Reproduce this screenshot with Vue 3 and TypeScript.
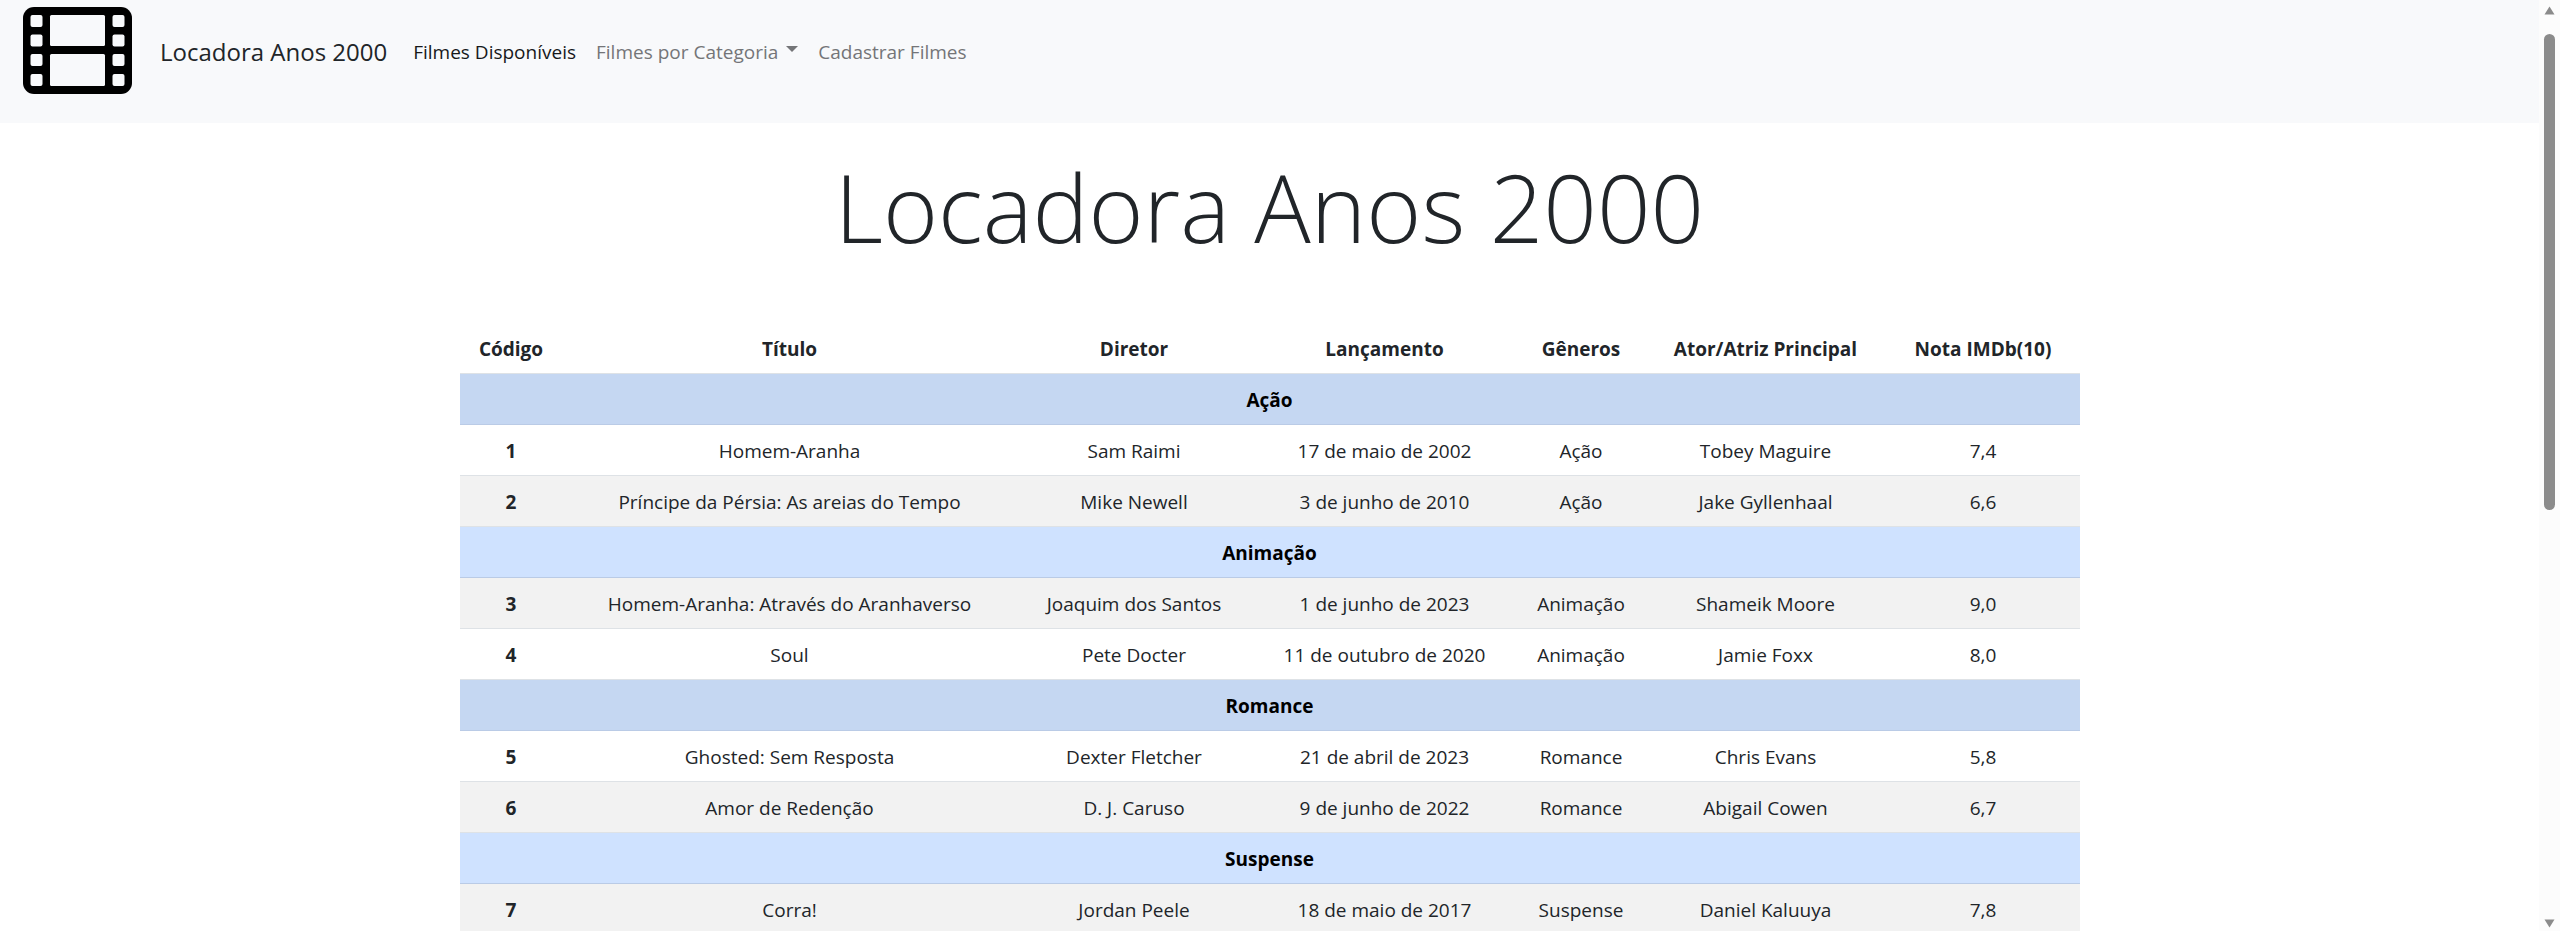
<script setup lang="ts">
interface Movie {
  id: number
  title: string
  director: string
  release: string
  genre: string
  lead: string
  rating: string
}

interface Category {
  name: string
  movies: Movie[]
}

const columns: { key: string; label: string }[] = [
  { key: 'id', label: 'Código' },
  { key: 'title', label: 'Título' },
  { key: 'director', label: 'Diretor' },
  { key: 'release', label: 'Lançamento' },
  { key: 'genre', label: 'Gêneros' },
  { key: 'lead', label: 'Ator/Atriz Principal' },
  { key: 'rating', label: 'Nota IMDb(10)' },
]

const categories: Category[] = [
  {
    name: 'Ação',
    movies: [
      { id: 1, title: 'Homem-Aranha', director: 'Sam Raimi', release: '17 de maio de 2002', genre: 'Ação', lead: 'Tobey Maguire', rating: '7,4' },
      { id: 2, title: 'Príncipe da Pérsia: As areias do Tempo', director: 'Mike Newell', release: '3 de junho de 2010', genre: 'Ação', lead: 'Jake Gyllenhaal', rating: '6,6' },
    ],
  },
  {
    name: 'Animação',
    movies: [
      { id: 3, title: 'Homem-Aranha: Através do Aranhaverso', director: 'Joaquim dos Santos', release: '1 de junho de 2023', genre: 'Animação', lead: 'Shameik Moore', rating: '9,0' },
      { id: 4, title: 'Soul', director: 'Pete Docter', release: '11 de outubro de 2020', genre: 'Animação', lead: 'Jamie Foxx', rating: '8,0' },
    ],
  },
  {
    name: 'Romance',
    movies: [
      { id: 5, title: 'Ghosted: Sem Resposta', director: 'Dexter Fletcher', release: '21 de abril de 2023', genre: 'Romance', lead: 'Chris Evans', rating: '5,8' },
      { id: 6, title: 'Amor de Redenção', director: 'D. J. Caruso', release: '9 de junho de 2022', genre: 'Romance', lead: 'Abigail Cowen', rating: '6,7' },
    ],
  },
  {
    name: 'Suspense',
    movies: [
      { id: 7, title: 'Corra!', director: 'Jordan Peele', release: '18 de maio de 2017', genre: 'Suspense', lead: 'Daniel Kaluuya', rating: '7,8' },
    ],
  },
]
</script>

<template>
  <div class="shell">
    <div class="page">
      <nav class="navbar">
        <a class="brand" href="#">
          <svg class="brand-icon" viewBox="0 0 109 87" aria-hidden="true">
            <rect width="109" height="87" rx="11" />
            <g class="frames">
              <rect x="27" y="8" width="55" height="31" rx="1.5" />
              <rect x="27" y="47" width="55" height="32" rx="1.5" />
              <rect v-for="y in [8, 27.5, 47, 67]" :key="'l' + y" x="7.5" :y="y" width="12" height="12" rx="2" />
              <rect v-for="y in [8, 27.5, 47, 67]" :key="'r' + y" x="89.5" :y="y" width="12" height="12" rx="2" />
            </g>
          </svg>
          <span class="brand-name">Locadora Anos 2000</span>
        </a>
        <ul class="links">
          <li><a class="link active" href="#" aria-current="page">Filmes Disponíveis</a></li>
          <li>
            <button class="link" type="button" aria-haspopup="true">
              Filmes por Categoria<span class="caret"></span>
            </button>
          </li>
          <li><a class="link" href="#">Cadastrar Filmes</a></li>
        </ul>
      </nav>

      <main class="content">
        <h1>Locadora Anos 2000</h1>
        <table>
          <colgroup>
            <col v-for="c in columns" :key="c.key" :class="'col-' + c.key" />
          </colgroup>
          <thead>
            <tr>
              <th v-for="c in columns" :key="c.key" scope="col">{{ c.label }}</th>
            </tr>
          </thead>
          <tbody>
            <template v-for="category in categories" :key="category.name">
              <tr class="category">
                <th colspan="7" scope="colgroup">{{ category.name }}</th>
              </tr>
              <tr v-for="m in category.movies" :key="m.id">
                <th scope="row">{{ m.id }}</th>
                <td>{{ m.title }}</td>
                <td>{{ m.director }}</td>
                <td>{{ m.release }}</td>
                <td>{{ m.genre }}</td>
                <td>{{ m.lead }}</td>
                <td>{{ m.rating }}</td>
              </tr>
            </template>
          </tbody>
        </table>
      </main>
    </div>

    <div class="scrollbar" aria-hidden="true">
      <svg class="arrow" viewBox="0 0 11 9"><path d="M5.5 0.5 10.5 8.5H0.5Z" /></svg>
      <div class="track"><div class="thumb"></div></div>
      <svg class="arrow" viewBox="0 0 11 9"><path d="M5.5 8.5 10.5 0.5H0.5Z" /></svg>
    </div>
  </div>
</template>

<style>
body {
  margin: 0;
  overflow: hidden;
}
</style>

<style scoped>
.shell {
  display: flex;
  height: 100vh;
  overflow: hidden;
  background: #fff;
  color: #212529;
  font-family: 'Segoe UI', 'Open Sans', 'Noto Sans', sans-serif;
  font-size: 19px;
  line-height: 30px;
}

.page {
  flex: 1;
  min-width: 0;
  overflow: hidden;
}

.navbar {
  display: flex;
  align-items: center;
  padding: 7px 23px 29px;
  background: #f8f9fb;
}

.brand {
  display: flex;
  align-items: center;
  gap: 28px;
  margin-right: 16px;
  color: #212529;
  font-size: 24px;
  text-decoration: none;
  white-space: nowrap;
}

.brand-name {
  padding-top: 2px;
}

.brand-icon {
  width: 109px;
  height: 87px;
}

.frames {
  fill: #f8f9fb;
}

.links {
  display: flex;
  margin: 0;
  padding: 0;
  list-style: none;
}

.link {
  display: flex;
  align-items: center;
  padding: 12px 10px 10px;
  border: 0;
  background: none;
  color: #747578;
  font: inherit;
  text-decoration: none;
  white-space: nowrap;
  cursor: pointer;
}

.link.active {
  color: #16181a;
}

.caret {
  margin: 0 0 6px 8px;
  border: 6px solid transparent;
  border-top-color: currentColor;
  border-bottom: 0;
}

.content {
  max-width: 1620px;
  margin: 0 auto;
  padding: 24px 15px;
}

h1 {
  margin: 0 0 56px;
  font-size: 94px;
  font-weight: 300;
  line-height: 120px;
  text-align: center;
}

table {
  width: 100%;
  table-layout: fixed;
  border-collapse: collapse;
  text-align: center;
}

.col-id { width: 103px; }
.col-title { width: 454px; }
.col-director { width: 235px; }
.col-release { width: 266px; }
.col-genre { width: 127px; }
.col-lead { width: 242px; }
.col-rating { width: 193px; }

th,
td {
  padding: 11px 0 9px;
  border-bottom: 1px solid #dee2e6;
}

th {
  font-weight: 700;
}

tbody tr:nth-child(odd) {
  background: #f2f2f2;
}

tbody tr:nth-child(3n + 2) {
  background: #fff;
}

tbody tr:nth-child(3n) {
  background: #f2f2f2;
}

tbody tr:nth-child(6n + 5) {
  background: #f2f2f2;
}

tbody tr:nth-child(6n) {
  background: #fff;
}

tbody tr.category:nth-child(odd) {
  background: #c5d7f2;
}

tbody tr.category:nth-child(even) {
  background: #cfe2ff;
}

.category th {
  border-color: #bacbe6;
  color: #000;
}

.scrollbar {
  display: flex;
  flex-direction: column;
  align-items: center;
  justify-content: space-between;
  width: 21px;
  padding: 6px 0 3px;
  box-sizing: border-box;
  background: #fcfcfc;
}

.arrow {
  width: 11px;
  height: 9px;
  fill: #8b8b8b;
}

.track {
  flex: 1;
  padding: 19px 0;
}

.thumb {
  width: 11px;
  height: 55%;
  border-radius: 6px;
  background: #8b8b8b;
}
</style>
